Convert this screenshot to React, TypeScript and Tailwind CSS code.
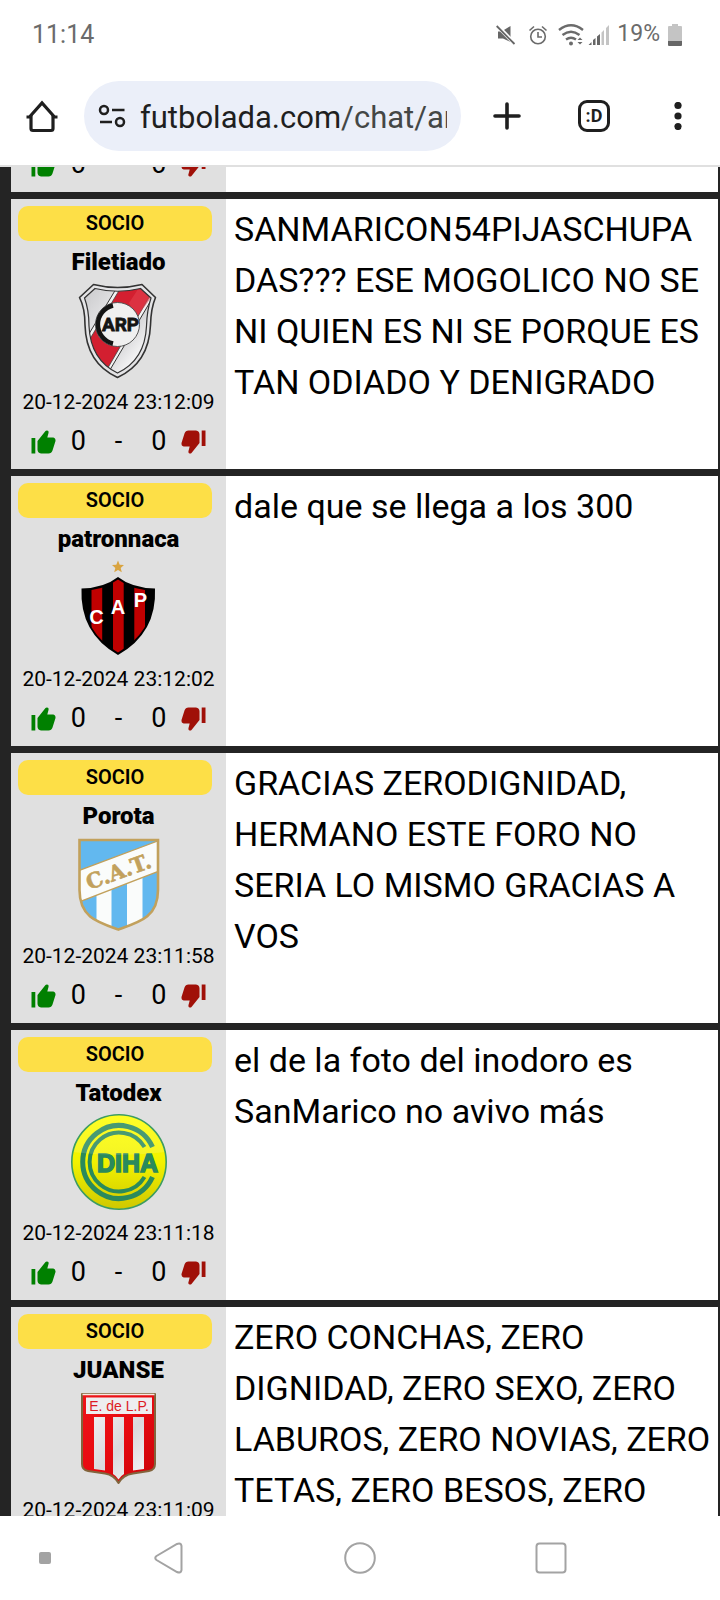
import type { ReactNode } from 'react';

function RiverCrest() {
  const shield =
    'M22.500 1.500Q46.500 7.500 71 1.500L84.500 14.500Q80 25 79.500 42Q78 80 46.500 94.500Q15 80 14 42Q14 25 8.500 14.500Z';
  const field = 'M24 5.500Q46.500 11 69.500 5.500L80 15Q76 27 75.500 43Q74 77 46.500 90Q19.500 77 18 43Q18 27 13.500 15Z';
  return (
    <svg viewBox="0 0 96 96" className="size-24" role="img" aria-label="River Plate">
      <defs>
        <linearGradient id="silver" x1="0" y1="0" x2="1" y2="1">
          <stop offset="0" stopColor="#c9c9cb" />
          <stop offset="0.3" stopColor="#e2e2e4" />
          <stop offset="0.55" stopColor="#cfcfd1" />
          <stop offset="0.8" stopColor="#f4f4f5" />
          <stop offset="1" stopColor="#bdbdbf" />
        </linearGradient>
        <clipPath id="river-field">
          <path d={field} />
        </clipPath>
      </defs>
      <path d={shield} fill="#e4e4e6" stroke="#333" strokeWidth="1.600" strokeLinejoin="round" />
      <path d={field} fill="url(#silver)" />
      <g clipPath="url(#river-field)">
        <path d="M51-4L-5 89L33 97L95-8Z" fill="#f3f3f3" stroke="#333" strokeWidth="1" />
        <path d="M55-4L-1 89L31 95L91-8Z" fill="#d31f30" stroke="#444" strokeWidth="0.800" />
        <path d="M71 0L82 12L66 34L58 20Z" fill="#e33f4c" opacity="0.600" />
      </g>
      <path d={field} fill="none" stroke="#333" strokeWidth="1.200" />
      <circle cx="46.500" cy="41.500" r="22" fill="#f0f0f0" stroke="#555" strokeWidth="1" />
      <path d="M42 22.500A19.500 19.500 0 0 0 42 60.500" fill="none" stroke="#141414" strokeWidth="4.500" />
      <text
        x="49.500"
        y="48"
        fill="#141414"
        stroke="#141414"
        strokeWidth="0.800"
        fontFamily="'Roboto', sans-serif"
        fontWeight="700"
        fontSize="19"
        textAnchor="middle"
      >
        ARP
      </text>
    </svg>
  );
}

function PatronatoCrest() {
  const shield = 'M47 17Q61 28 84 28.500Q86 73 47 95Q8.500 73 10.500 28.500Q33 28 47 17Z';
  return (
    <svg viewBox="0 0 96 96" className="size-24" role="img" aria-label="Patronato">
      <defs>
        <clipPath id="patronato">
          <path d="M47 19.500Q61 30 82 30.500Q84 71 47 92.500Q10.500 71 12.500 30.500Q33 30 47 19.500Z" />
        </clipPath>
      </defs>
      <path d="M47 0.500L48.700 4.800L53 5.100L49.700 8L50.800 12.200L47 9.900L43.200 12.200L44.300 8L41 5.100L45.300 4.800Z" fill="#d9a441" />
      <path d={shield} fill="#000" />
      <g clipPath="url(#patronato)" fill="#c00000">
        <rect x="20.500" y="18" width="10.700" height="80" />
        <rect x="42" y="18" width="10.700" height="80" />
        <rect x="63.300" y="18" width="10.700" height="80" />
      </g>
      <g fill="#fff" fontFamily="'Liberation Sans', sans-serif" fontWeight="700" fontSize="20" textAnchor="middle">
        <text x="25.500" y="63.500">C</text>
        <text x="47" y="54">A</text>
        <text x="69.500" y="47">P</text>
      </g>
    </svg>
  );
}

function TucumanCrest() {
  const shield = 'M8.500 3H87V53C87 80 69 85 47.500 92.500C26 85 8.500 80 8.500 53Z';
  return (
    <svg viewBox="0 0 96 96" className="size-24" role="img" aria-label="Atlético Tucumán">
      <defs>
        <clipPath id="tucuman">
          <path d={shield} />
        </clipPath>
      </defs>
      <g clipPath="url(#tucuman)">
        <rect width="96" height="96" fill="#62b8ef" />
        <path d="M25.500 45H40.500V96H25.500ZM56 40H71.500V96H56Z" fill="#fafcfb" />
        <path d="M4 35L92 2V32.500L4 66.500Z" fill="#fafcfb" stroke="#c2a15c" strokeWidth="1.400" />
      </g>
      <path d={shield} fill="none" stroke="#c2a15c" strokeWidth="2.600" />
      <text
        x="47.500"
        y="42"
        transform="rotate(-20 47.500 34.500)"
        fill="#c2a15c"
        stroke="#c2a15c"
        strokeWidth="0.600"
        fontFamily="'DejaVu Serif', serif"
        fontWeight="700"
        fontSize="21"
        textAnchor="middle"
      >
        C.A.T.
      </text>
    </svg>
  );
}

function DefensaCrest() {
  return (
    <svg viewBox="0 0 96 96" className="size-24" role="img" aria-label="Defensa y Justicia">
      <defs>
        <linearGradient id="yellow" x1="0" y1="0" x2="0" y2="1">
          <stop offset="0" stopColor="#ffff00" />
          <stop offset="0.500" stopColor="#f2f200" />
          <stop offset="1" stopColor="#cfc800" />
        </linearGradient>
        <clipPath id="defensa">
          <circle cx="48" cy="48" r="46.500" />
        </clipPath>
      </defs>
      <circle cx="48" cy="48" r="47.200" fill="url(#yellow)" stroke="#3c9c62" strokeWidth="1.600" />
      <g fill="none" stroke="#2a8a5c">
        <path d="M81.500 33A36.500 36.500 0 1 0 81.500 63" strokeWidth="5" />
        <path d="M73.500 33A29.500 29.500 0 1 0 73.500 63" strokeWidth="4" />
      </g>
      <text
        x="26"
        y="57.500"
        fill="#2a8a5c"
        stroke="#2a8a5c"
        strokeWidth="1.500"
        fontFamily="'Liberation Sans', sans-serif"
        fontWeight="700"
        fontSize="25"
      >
        DIHA
      </text>
      <path clipPath="url(#defensa)" d="M0 0H96V38Q48 44 0 38Z" fill="#fff" opacity="0.140" />
    </svg>
  );
}

function EstudiantesCrest() {
  const shield = 'M11 3H84V73Q84 79 78 80L62 82.500Q52 84 47.500 92Q43 84 34 82.500L17 80Q11 79 11 73Z';
  return (
    <svg viewBox="0 0 96 96" className="size-24" role="img" aria-label="Estudiantes de La Plata">
      <defs>
        <linearGradient id="stripe" x1="0" y1="0" x2="1" y2="1">
          <stop offset="0" stopColor="#ededef" />
          <stop offset="0.500" stopColor="#d9d9dc" />
          <stop offset="1" stopColor="#f6f6f6" />
        </linearGradient>
        <linearGradient id="red" x1="0" y1="0" x2="1" y2="1">
          <stop offset="0" stopColor="#ee1418" />
          <stop offset="0.500" stopColor="#e80a10" />
          <stop offset="1" stopColor="#c90409" />
        </linearGradient>
      </defs>
      <path d={shield} fill="url(#red)" stroke="#82643c" strokeWidth="2" strokeLinejoin="round" />
      <path d="M11.500 3.500H83.500" stroke="#f6e8df" strokeWidth="1.500" />
      <rect x="15" y="6.500" width="66" height="16.500" fill="#eeeef0" />
      <path
        d="M23 26H34V79.500L23 78ZM62 26H73V78L62 79.500ZM42 26H53V83Q49.500 85 47.500 88.500Q45.500 85 42 83Z"
        fill="url(#stripe)"
      />
      <text x="48" y="20" fill="#dd1c24" fontFamily="'Liberation Sans', sans-serif" fontSize="14" textAnchor="middle">
        E. de L.P.
      </text>
    </svg>
  );
}

type Message = { user: string; date: string; text: string; crest: ReactNode };

const messages: Message[] = [
  {
    user: 'Filetiado',
    date: '20-12-2024 23:12:09',
    text: 'SANMARICON54PIJASCHUPADAS??? ESE MOGOLICO NO SE NI QUIEN ES NI SE PORQUE ES TAN ODIADO Y DENIGRADO',
    crest: <RiverCrest />,
  },
  {
    user: 'patronnaca',
    date: '20-12-2024 23:12:02',
    text: 'dale que se llega a los 300',
    crest: <PatronatoCrest />,
  },
  {
    user: 'Porota',
    date: '20-12-2024 23:11:58',
    text: 'GRACIAS ZERODIGNIDAD, HERMANO ESTE FORO NO SERIA LO MISMO GRACIAS A VOS',
    crest: <TucumanCrest />,
  },
  {
    user: 'Tatodex',
    date: '20-12-2024 23:11:18',
    text: 'el de la foto del inodoro es SanMarico no avivo más',
    crest: <DefensaCrest />,
  },
  {
    user: 'JUANSE',
    date: '20-12-2024 23:11:09',
    text: 'ZERO CONCHAS, ZERO DIGNIDAD, ZERO SEXO, ZERO LABUROS, ZERO NOVIAS, ZERO TETAS, ZERO BESOS, ZERO',
    crest: <EstudiantesCrest />,
  },
];

function Thumb() {
  return (
    <svg viewBox="0 0 25 24" className="h-6 w-[25px]" fill="currentColor" aria-hidden="true">
      <rect x="0.500" y="8" width="3.800" height="15.500" />
      <path d="M6.500 11L14.500 1Q15.500 0 17 0.800Q18 1.500 17.500 3L16.300 7.500H22.300Q24.800 8 24.500 11L21.500 20.500Q20.500 23.500 17.500 23.500H10Q6.500 23 6.500 19.500Z" />
    </svg>
  );
}

function Votes() {
  return (
    <div className="flex h-[33px] w-[175px] shrink-0 items-center justify-between text-[27px] leading-[33px]">
      <button type="button" aria-label="Me gusta" className="text-[#008000]">
        <Thumb />
      </button>
      <span>0</span>
      <span className="w-9 text-center">-</span>
      <span>0</span>
      <button type="button" aria-label="No me gusta" className="rotate-180 text-[#a01008]">
        <Thumb />
      </button>
    </div>
  );
}

function MessageRow({ message }: { message: Message }) {
  return (
    <article className="flex min-h-[270px] shrink-0 bg-white">
      <div className="flex w-[215px] shrink-0 flex-col items-center bg-[#e0e0e0] pt-[7px] pb-[11px]">
        <div className="self-stretch pr-[14px] pl-[7px]">
          <div className="h-[35px] rounded-[10px] bg-[#fddf47] text-center text-[20px] leading-[34px] font-semibold">SOCIO</div>
        </div>
        <h2 className="text-[24px] leading-[42px] font-black">{message.user}</h2>
        {message.crest}
        <time className="text-[21px] leading-[46px] whitespace-nowrap">{message.date}</time>
        <Votes />
      </div>
      <p className="min-w-0 flex-1 pt-[5px] pr-1.5 pl-2 text-[34px] leading-[51px] wrap-anywhere">{message.text}</p>
    </article>
  );
}

function StatusBar() {
  return (
    <div className="flex h-[69px] items-center justify-between pr-[38px] pl-8 text-[#6b6b6b]">
      <span className="text-[25px]">11:14</span>
      <div className="flex items-center">
        <svg viewBox="0 0 20 20" className="mr-3 size-5" aria-label="Silencio" role="img">
          <path d="M2 6.500H5.500L14.500 1V17L7 13.500H2Z" fill="#666" />
          <path d="M0.500 0L19.500 19.500" stroke="#fff" strokeWidth="4" />
          <path d="M0.700 1L18.500 19" stroke="#666" strokeWidth="1.800" />
        </svg>
        <svg viewBox="0 0 20 20" className="mr-2.5 size-5" aria-label="Alarma" role="img" fill="none" stroke="#6b6b6b" strokeWidth="1.600">
          <circle cx="10" cy="11.500" r="7.300" />
          <path d="M10 7V12H14M1.500 5.500L6 1.500M14 1.500L18.500 5.500" />
        </svg>
        <svg viewBox="0 0 26 24" className="mr-1 h-6 w-[26px]" aria-label="Wi-Fi" role="img" fill="none" stroke="#6b6b6b">
          <path d="M1 7Q13-2.500 25 7" strokeWidth="2.400" />
          <path d="M4.500 12Q13 5.500 21.500 12" strokeWidth="2.400" />
          <path d="M8 16.500Q13 13 18 16.500" strokeWidth="2.400" />
          <circle cx="13" cy="20.500" r="2" fill="#6b6b6b" stroke="none" />
          <path d="M19.500 17L22 14.500L24.500 17ZM19.500 19L22 21.500L24.500 19Z" fill="#6b6b6b" stroke="none" />
        </svg>
        <svg viewBox="0 0 22 22" className="mr-[7px] size-[22px]" aria-label="Señal" role="img">
          <path d="M0.500 21L3.500 18V21ZM5 21V16L7.500 14V21ZM9 21V12.500L12 10V21Z" fill="#666" />
          <path d="M13.500 21V8.500L16 6V21ZM18 21V4L21 1V21Z" fill="#c4c4c4" />
        </svg>
        <span className="mr-2 text-[23px]">19%</span>
        <svg viewBox="0 0 14 22" className="h-[22px] w-[14px]" aria-label="Batería" role="img">
          <path d="M4 0H10V2H13Q14 2 14 3V17H0V3Q0 2 1 2H4Z" fill="#c4c4c4" />
          <path d="M0 17H14V21Q14 22 13 22H1Q0 22 0 21Z" fill="#666" />
        </svg>
      </div>
    </div>
  );
}

function Toolbar() {
  return (
    <div className="flex h-[98px] items-start border-b-2 border-[#e0e0e0] pt-3 pr-[33px] text-[#1f1f1f]">
      <button type="button" aria-label="Inicio" className="flex h-[70px] w-[84px] shrink-0 items-center justify-center">
        <svg viewBox="0 0 34 34" className="size-[34px]" fill="none" stroke="currentColor" strokeWidth="3.200">
          <path d="M6 16V29.500Q6 31.500 8 31.500H26Q28 31.500 28 29.500V16" />
          <path d="M1.500 18H4.500L17 4L29.500 18H32.500" />
        </svg>
      </button>
      <button type="button" aria-label="Dirección" className="flex h-[70px] min-w-0 flex-1 items-center rounded-full bg-[#ebeff9] px-[14px]">
        <svg viewBox="0 0 28 24" className="mr-[14px] h-6 w-7 shrink-0" fill="none" stroke="currentColor" strokeWidth="2.500">
          <circle cx="6" cy="6" r="4" />
          <circle cx="22" cy="18" r="4" />
          <path d="M14 6H26.500M2 18H14" />
        </svg>
        <span className="min-w-0 flex-1 overflow-hidden pt-1 text-left text-[31px] leading-[66px] whitespace-nowrap">
          futbolada.com<span className="text-[#444746]">/chat/ar</span>
        </span>
      </button>
      <div className="flex h-[70px] shrink-0 items-center pl-8">
        <button type="button" aria-label="Nueva pestaña">
          <svg viewBox="0 0 28 28" className="size-7" stroke="currentColor" strokeWidth="3.600" strokeLinecap="round">
            <path d="M14 2V26M2 14H26" />
          </svg>
        </button>
        <button
          type="button"
          aria-label="Pestañas"
          className="ml-[57px] flex size-8 items-center justify-center rounded-[9px] border-3 border-[#1f1f1f] text-[18px] leading-none font-bold"
        >
          :D
        </button>
        <button type="button" aria-label="Más opciones" className="ml-[59px]">
          <svg viewBox="0 0 18 28" className="h-7 w-[18px]" fill="currentColor">
            <circle cx="9" cy="3.500" r="3.600" />
            <circle cx="9" cy="14" r="3.600" />
            <circle cx="9" cy="24.500" r="3.600" />
          </svg>
        </button>
      </div>
    </div>
  );
}

function NavigationBar() {
  return (
    <nav className="flex h-[84px] shrink-0 items-center bg-white pl-[39px] text-[#a3a3a3]">
      <button type="button" aria-label="Ocultar barra">
        <svg viewBox="0 0 12 12" className="size-3" fill="currentColor">
          <rect width="12" height="12" rx="2" />
        </svg>
      </button>
      <div className="flex flex-1 items-center justify-between pr-[153px] pl-[102px]">
        <button type="button" aria-label="Atrás">
          <svg viewBox="0 0 32 34" className="h-[34px] w-8" fill="none" stroke="currentColor" strokeWidth="2">
            <path d="M3.500 15L24 3Q28 1.500 28.500 5V29Q28 32.500 24 31L3.500 19Q1 17 3.500 15Z" />
          </svg>
        </button>
        <button type="button" aria-label="Inicio del teléfono">
          <svg viewBox="0 0 32 32" className="size-8" fill="none" stroke="currentColor" strokeWidth="2">
            <circle cx="16" cy="16" r="14.800" />
          </svg>
        </button>
        <button type="button" aria-label="Recientes">
          <svg viewBox="0 0 32 32" className="size-8" fill="none" stroke="currentColor" strokeWidth="2">
            <rect x="1.500" y="1.500" width="29" height="29" rx="3" />
          </svg>
        </button>
      </div>
    </nav>
  );
}

export default function App() {
  return (
    <div className="flex h-screen flex-col bg-white font-['Roboto',sans-serif] text-black">
      <header className="shrink-0">
        <StatusBar />
        <Toolbar />
      </header>
      <main className="flex min-h-0 flex-1 flex-col gap-[7px] overflow-hidden bg-[#242424] pr-[2px] pl-[11px]">
        <div className="flex h-[25px] shrink-0 overflow-hidden bg-white">
          <div className="flex w-[215px] flex-col items-center justify-end bg-[#e0e0e0] pb-[11px]">
            <Votes />
          </div>
        </div>
        {messages.map((message) => (
          <MessageRow key={message.date} message={message} />
        ))}
      </main>
      <NavigationBar />
    </div>
  );
}
